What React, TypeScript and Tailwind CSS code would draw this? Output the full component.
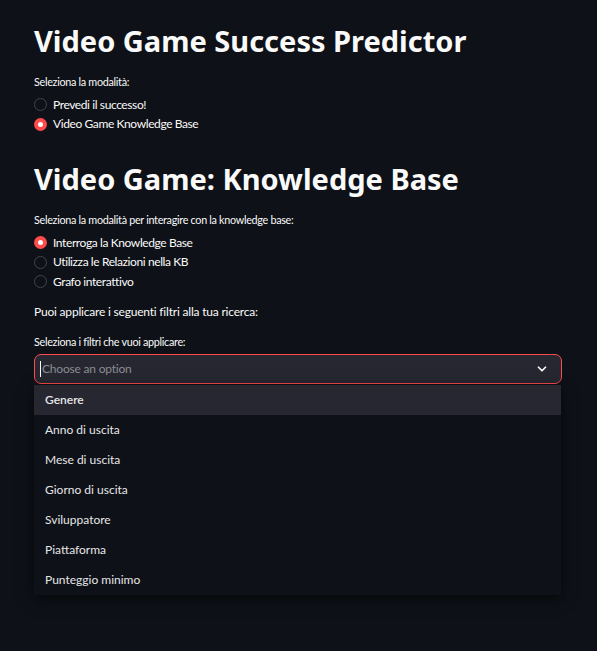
import { ChevronDown } from "lucide-react";

const font = { fontFamily: "Lato, 'Noto Sans', sans-serif" };
const titleFont = { fontFamily: "'Noto Sans', Lato, sans-serif" };

function Radio({ label, checked }: { label: string; checked?: boolean }) {
  return (
    <div className="flex items-center h-[19.5px] gap-[6px]">
      {checked ? (
        <span className="w-[13px] h-[13px] rounded-full bg-[#ff4b4b] flex items-center justify-center">
          <span className="w-[5px] h-[5px] rounded-full bg-white" />
        </span>
      ) : (
        <span className="w-[13px] h-[13px] rounded-full border border-[#44464e] bg-[#0e1117]" />
      )}
      <span className="text-[12px] tracking-[-0.4px] text-[#fafafa] leading-none">{label}</span>
    </div>
  );
}

const options = [
  "Genere",
  "Anno di uscita",
  "Mese di uscita",
  "Giorno di uscita",
  "Sviluppatore",
  "Piattaforma",
  "Punteggio minimo",
];

export default function App() {
  return (
    <div className="min-h-screen bg-[#0e1117] text-[#fafafa] px-[34px] pt-[23px]" style={font}>
      <div className="w-[528px]">
        {/* Title */}
        <h1 className="text-[29px] font-bold leading-[36px]" style={titleFont}>
          Video Game Success Predictor
        </h1>
        <p className="text-[10.8px] tracking-[-0.3px] mt-[15px] leading-[16px]">Seleziona la modalità:</p>
        <div className="mt-[5px] flex flex-col">
          <Radio label="Prevedi il successo!" />
          <Radio label="Video Game Knowledge Base" checked />
        </div>

        {/* Knowledge base section */}
        <h1 className="text-[29px] font-bold leading-[36px] mt-[27px]" style={titleFont}>
          Video Game: Knowledge Base
        </h1>
        <p className="text-[10.8px] tracking-[-0.3px] mt-[15px] leading-[16px]">
          Seleziona la modalità per interagire con la knowledge base:
        </p>
        <div className="mt-[5px] flex flex-col">
          <Radio label="Interroga la Knowledge Base" checked />
          <Radio label="Utilizza le Relazioni nella KB" />
          <Radio label="Grafo interattivo" />
        </div>

        <p className="text-[12px] tracking-[-0.2px] mt-[11px] leading-[18px]">
          Puoi applicare i seguenti filtri alla tua ricerca:
        </p>
        <p className="text-[10.8px] tracking-[-0.3px] mt-[13px] leading-[16px]">
          Seleziona i filtri che vuoi applicare:
        </p>

        {/* Multiselect */}
        <div className="relative mt-[4px]">
          <div className="h-[30px] rounded-[7px] border border-[#ff4b4b] bg-[#262730] flex items-center pl-[5px] pr-[12px]">
            <span className="w-px h-[16px] bg-[#fafafa]" />
            <span className="text-[12px] tracking-[-0.2px] text-[#8b8d94] ml-px flex-1">Choose an option</span>
            <ChevronDown className="w-[14px] h-[14px] text-[#fafafa]" strokeWidth={3} />
          </div>
          <div className="absolute left-0 right-[1px] top-[31px] bg-[#0e1117] shadow-[0_4px_14px_rgba(0,0,0,0.6)]">
            {options.map((o, i) => (
              <div
                key={o}
                className={`h-[30px] flex items-center pl-[11px] text-[12px] text-[#e6e6e8] ${
                  i === 0 ? "bg-[#262730] font-semibold" : ""
                }`}
              >
                {o}
              </div>
            ))}
          </div>
        </div>
      </div>
    </div>
  );
}
